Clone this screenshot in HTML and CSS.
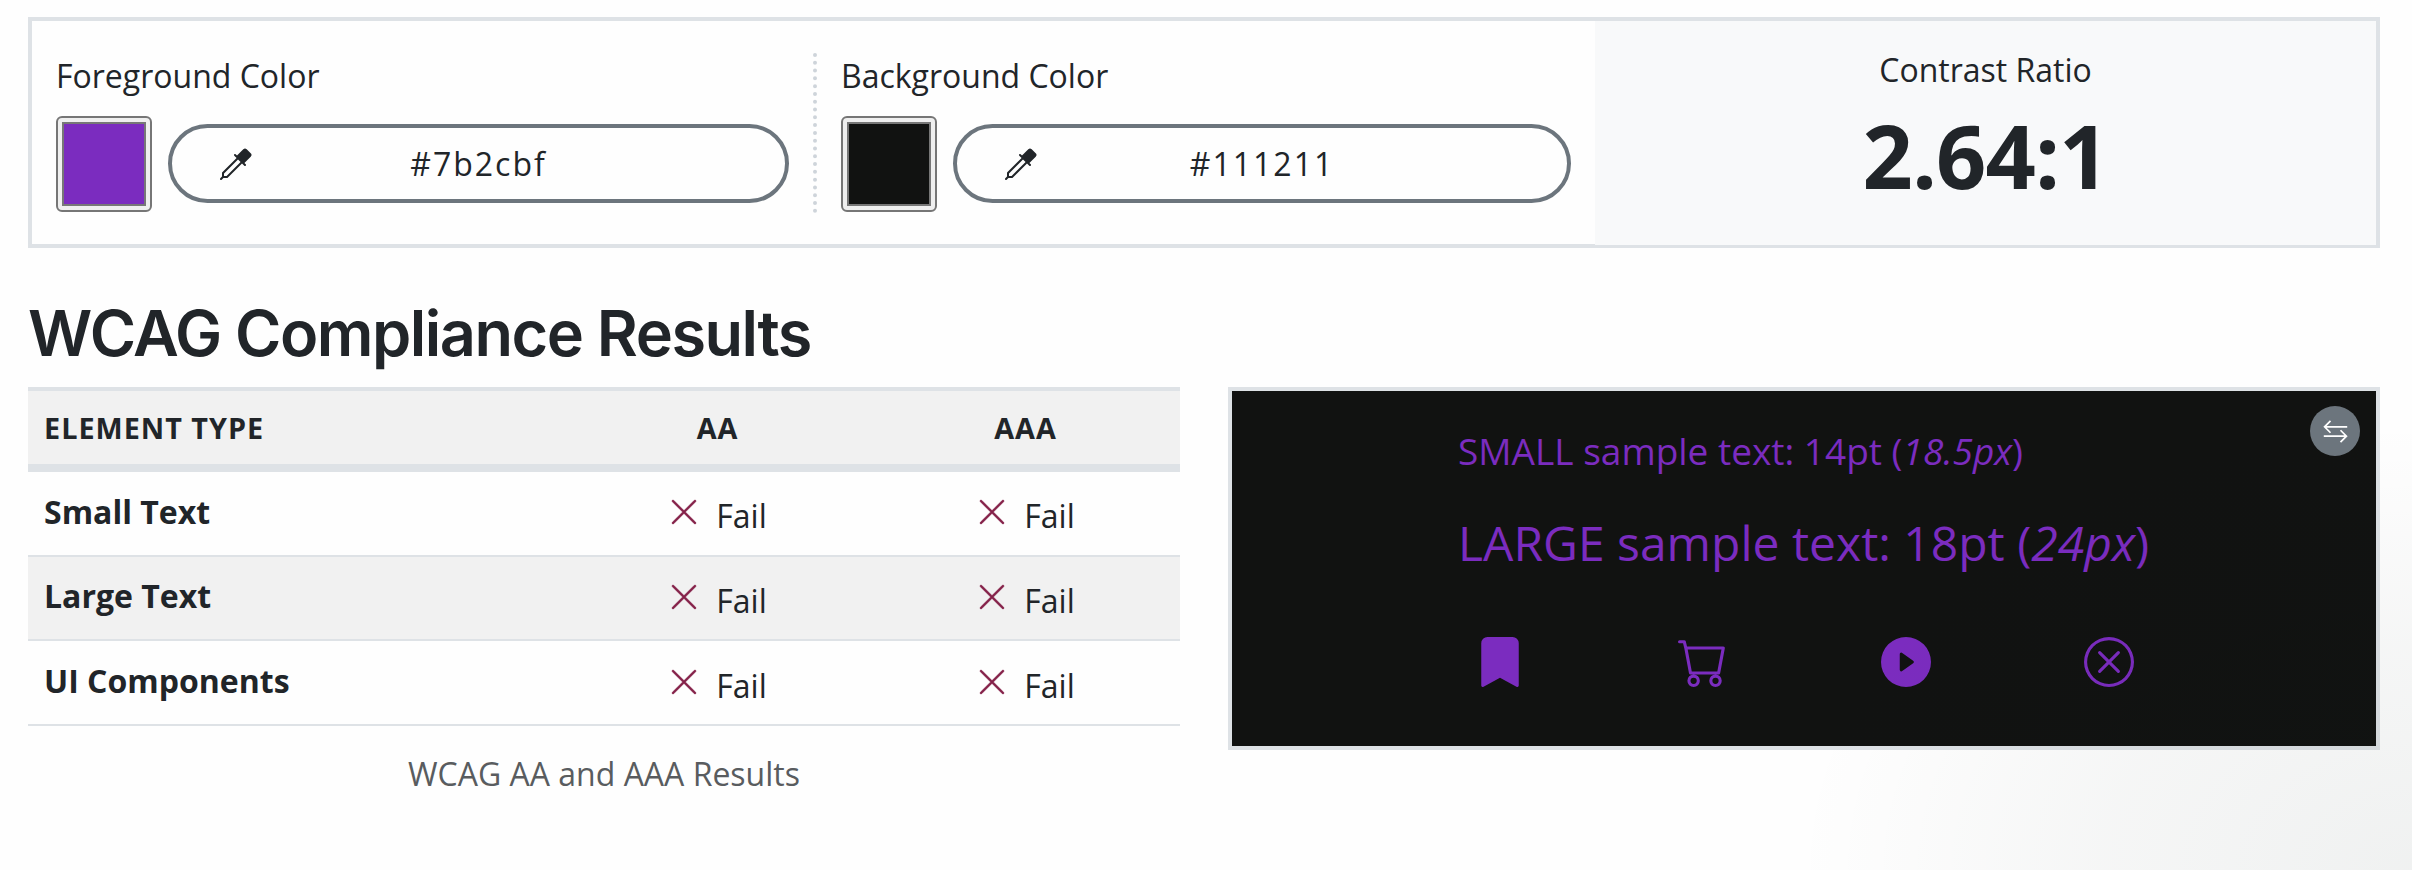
FILE: index.html
```html
<!DOCTYPE html>
<html lang="en">
<head>
<meta charset="utf-8">
<title>Contrast Checker</title>
<link rel="stylesheet" href="styles.css">
</head>
<body>
<svg class="sprite" aria-hidden="true">
  <symbol id="eyedropper" viewBox="0 0 16 16"><path d="M13.354.646a1.207 1.207 0 0 0-1.708 0L8.5 3.793l-.646-.647a.5.5 0 1 0-.708.708L8.293 5l-7.147 7.146A.5.5 0 0 0 1 12.5v1.793l-.854.853a.5.5 0 1 0 .708.707L1.707 15H3.5a.5.5 0 0 0 .354-.146L11 7.707l1.146 1.147a.5.5 0 0 0 .708-.708l-.647-.646 3.147-3.146a1.207 1.207 0 0 0 0-1.708zM2 12.707l7-7L10.293 7l-7 7H2z"/></symbol>
  <symbol id="x-lg" viewBox="0 0 16 16"><path d="M2.146 2.854a.5.5 0 1 1 .708-.708L8 7.293l5.146-5.147a.5.5 0 0 1 .708.708L8.707 8l5.147 5.146a.5.5 0 0 1-.708.708L8 8.707l-5.146 5.147a.5.5 0 0 1-.708-.708L7.293 8z"/></symbol>
</svg>
<main class="page">
  <section class="checker">
    <div class="field">
      <label class="label">Foreground Color</label>
      <div class="controls">
        <span class="swatch"><span class="swatch-color purple"></span></span>
        <div class="hex"><svg class="hex-icon"><use href="#eyedropper"/></svg><span class="hex-value">#7b2cbf</span></div>
      </div>
    </div>
    <div class="field divided">
      <label class="label">Background Color</label>
      <div class="controls">
        <span class="swatch"><span class="swatch-color black"></span></span>
        <div class="hex"><svg class="hex-icon"><use href="#eyedropper"/></svg><span class="hex-value">#111211</span></div>
      </div>
    </div>
    <div class="ratio">
      <div class="ratio-label">Contrast Ratio</div>
      <div class="ratio-value">2.64:1</div>
    </div>
  </section>

  <h2 class="heading">WCAG Compliance Results</h2>

  <section class="results">
    <table class="table">
      <caption>WCAG AA and AAA Results</caption>
      <thead>
        <tr><th class="type">ELEMENT TYPE</th><th>AA</th><th>AAA</th></tr>
      </thead>
      <tbody>
        <tr><th>Small Text</th><td><svg class="fail"><use href="#x-lg"/></svg><span class="result">Fail</span></td><td><svg class="fail"><use href="#x-lg"/></svg><span class="result">Fail</span></td></tr>
        <tr class="striped"><th>Large Text</th><td><svg class="fail"><use href="#x-lg"/></svg><span class="result">Fail</span></td><td><svg class="fail"><use href="#x-lg"/></svg><span class="result">Fail</span></td></tr>
        <tr><th>UI Components</th><td><svg class="fail"><use href="#x-lg"/></svg><span class="result">Fail</span></td><td><svg class="fail"><use href="#x-lg"/></svg><span class="result">Fail</span></td></tr>
      </tbody>
    </table>

    <div class="preview">
      <button class="swap" aria-label="Swap colors"><svg viewBox="0 0 16 16"><path d="M15.5 5H1M4.8 1.2 1 5l3.8 3.8M.5 11H15M11.2 7.2 15 11l-3.8 3.8"/></svg></button>
      <div class="samples">
        <p class="small">SMALL sample text: 14pt (<em>18.5px</em>)</p>
        <p class="large">LARGE sample text: 18pt (<em>24px</em>)</p>
      </div>
      <div class="icons">
        <svg viewBox="0 0 16 16"><path d="M2 2v13.5a.5.5 0 0 0 .74.439L8 13.069l5.26 2.87A.5.5 0 0 0 14 15.5V2a2 2 0 0 0-2-2H4a2 2 0 0 0-2 2"/></svg>
        <svg viewBox="0 0 16 16"><path d="M0 1.5A.5.5 0 0 1 .5 1H2a.5.5 0 0 1 .485.379L2.89 3H14.5a.5.5 0 0 1 .491.592l-1.5 8A.5.5 0 0 1 13 12H4a.5.5 0 0 1-.491-.408L2.01 3.607 1.61 2H.5a.5.5 0 0 1-.5-.5M3.102 4l1.313 7h8.17l1.313-7zM5 12a2 2 0 1 0 0 4 2 2 0 0 0 0-4m7 0a2 2 0 1 0 0 4 2 2 0 0 0 0-4m-7 1a1 1 0 1 1 0 2 1 1 0 0 1 0-2m7 0a1 1 0 1 1 0 2 1 1 0 0 1 0-2"/></svg>
        <svg viewBox="0 0 16 16"><path d="M16 8A8 8 0 1 1 0 8a8 8 0 0 1 16 0M6.79 5.093A.5.5 0 0 0 6 5.5v5a.5.5 0 0 0 .79.407l3.5-2.5a.5.5 0 0 0 0-.814z"/></svg>
        <svg viewBox="0 0 16 16"><path d="M8 15A7 7 0 1 1 8 1a7 7 0 0 1 0 14m0 1A8 8 0 1 0 8 0a8 8 0 0 0 0 16"/><path d="M4.646 4.646a.5.5 0 0 1 .708 0L8 7.293l2.646-2.647a.5.5 0 0 1 .708.708L8.707 8l2.647 2.646a.5.5 0 0 1-.708.708L8 8.707l-2.646 2.647a.5.5 0 0 1-.708-.708L7.293 8 4.646 5.354a.5.5 0 0 1 0-.708"/></svg>
      </div>
    </div>
  </section>
</main>
</body>
</html>
```
FILE: styles.css
```css
* { box-sizing: border-box; }

body {
  margin: 0;
  height: 870px;
  overflow: hidden;
  background: #fefefe;
  color: #212529;
  font: 32px/48px "Open Sans", "Noto Sans", sans-serif;
}

.sprite { display: none; }

.page {
  position: relative;
  height: 870px;
  padding: 17px 32px 0 28px;
}

/* Soft corner shade that lies over the content */
.page::after {
  content: "";
  position: absolute;
  inset: 0;
  pointer-events: none;
  background: radial-gradient(ellipse 620px 450px at 100% 100%, rgba(10, 35, 30, 0.06) 0%, rgba(10, 30, 25, 0.034) 50%, rgba(10, 30, 25, 0.007) 88%, rgba(10, 30, 25, 0) 100%);
}

/* Color pickers and ratio */
.checker {
  display: grid;
  grid-template-columns: 781px 782px 1fr;
  height: 231px;
  border: 4px solid #dee2e6;
  background: #fefefe;
}

.field { padding: 32px 24px 0; }

.divided {
  padding-top: 0;
  margin: 32px 0;
  height: 160px;
  border-left: 4px dotted #ced4da;
}

.label { display: block; height: 63px; line-height: 46px; }

.controls {
  display: flex;
  align-items: center;
  gap: 16px;
  height: 96px;
}

.swatch {
  flex: none;
  width: 96px;
  height: 96px;
  padding: 4px;
  border: 2px solid #767676;
  border-radius: 6px;
  background: #efefef;
}

.swatch-color {
  display: block;
  height: 100%;
  border: 2px solid #777;
}

.purple { background: #7b2cbf; }
.black { background: #111211; }

.hex {
  flex: 1;
  display: grid;
  grid-template-columns: 32px 1fr 32px;
  align-items: center;
  height: 79px;
  margin-bottom: 1px;
  padding: 0 48px;
  border: 4px solid #6c757d;
  border-radius: 40px;
  background: #fefefe;
}

.hex-icon { width: 32px; height: 32px; fill: #212529; }
.hex-value { text-align: center; letter-spacing: 2px; }

.ratio {
  padding-top: 25px;
  background: #f8f9fa;
  text-align: center;
}

.ratio-value {
  margin-top: 8px;
  font-size: 88px;
  line-height: 106px;
  font-weight: 700;
  letter-spacing: -0.9px;
}

.heading {
  margin: 0;
  padding-top: 47px;
  height: 139px;
  font: 600 63px/77px Inter, sans-serif;
  letter-spacing: -1.5px;
}

/* Results */
.results {
  display: grid;
  grid-template-columns: 1152px 1152px;
  gap: 48px;
  align-items: start;
}

.table {
  width: 1152px;
  table-layout: fixed;
  border-collapse: separate;
  border-spacing: 0;
}

.table caption {
  caption-side: bottom;
  height: 80px;
  padding-top: 24px;
  color: #595c5f;
}

.table thead th {
  width: 308px;
  height: 85px;
  padding: 1px 17px 0 16px;
  border-top: 4px solid #dee2e6;
  border-bottom: 8px solid #dee2e6;
  background: #f1f1f1;
  font-size: 28.8px;
  line-height: 44px;
  letter-spacing: 1px;
  text-align: center;
}

.table thead .type { width: 536px; text-align: left; }

.table tbody th,
.table tbody td {
  height: 84.67px;
  border-bottom: 2px solid #dee2e6;
}

.table tbody th { padding: 0 16px 3px; text-align: left; font-weight: 700; }
.table tbody td { padding: 6px 17px 0 16px; text-align: center; }
.table .striped { background: #f1f1f1; }

.fail {
  width: 32px;
  height: 32px;
  fill: #842048;
  stroke: #842048;
  stroke-width: 0.25;
  vertical-align: 0;
}

.result { margin-left: 16px; }

.preview {
  position: relative;
  height: 363px;
  border: 4px solid #dee2e6;
  background: #111211;
  color: #7b2cbf;
}

.swap {
  position: absolute;
  top: 15px;
  right: 16px;
  display: grid;
  place-items: center;
  width: 50px;
  height: 50px;
  padding: 0;
  border: 0;
  border-radius: 50%;
  background: #6c757d;
}

.swap svg { width: 25px; height: 25px; fill: none; stroke: #fff; stroke-width: 1.1; }

.samples { width: 692px; margin: 0 auto; padding-top: 32px; white-space: nowrap; }
.samples p { margin: 0; }
.small { font-size: 37px; line-height: 56px; }
.samples .large { margin-top: 28px; font-size: 48px; line-height: 72px; }

.icons {
  display: flex;
  justify-content: space-around;
  width: 812px;
  margin: 58px auto 0;
}

.icons svg { width: 50px; height: 50px; fill: currentColor; }
```
